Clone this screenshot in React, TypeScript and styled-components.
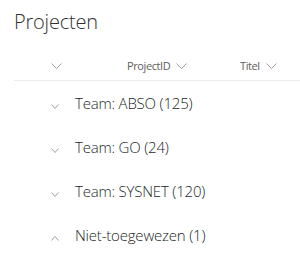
import React from "react";
import styled, { createGlobalStyle } from "styled-components";

const Global = createGlobalStyle`
  html, body { margin: 0; padding: 0; background: #ffffff; }
  body { font-family: "Segoe UI", "Open Sans", "Noto Sans", sans-serif; color: #323130; }
`;

const Page = styled.div`
  width: 300px;
  height: 277px;
  overflow: hidden;
  background: #ffffff;
`;

const Title = styled.h1`
  margin: 0;
  padding: 8px 0 0 14px;
  height: 41px;
  box-sizing: border-box;
  font-size: 20px;
  font-weight: 300;
  line-height: 28px;
  color: #323130;
  letter-spacing: -0.2px;
`;

const HeaderRow = styled.div`
  display: flex;
  align-items: flex-end;
  height: 40px;
  padding-bottom: 7px;
  margin-left: 14px;
  border-bottom: 1px solid #edebe9;
  box-sizing: border-box;
`;

const Cell = styled.div<{ $w: number; $pad?: number }>`
  display: flex;
  align-items: center;
  width: ${(p) => p.$w}px;
  height: 14px;
  padding-left: ${(p) => p.$pad ?? 0}px;
  box-sizing: border-box;
  flex: none;
  font-size: 11px;
  line-height: 14px;
  letter-spacing: -0.4px;
  color: #605e5c;
  gap: 6px;
`;

const List = styled.div`
  display: flex;
  flex-direction: column;
`;

const GroupRow = styled.div`
  display: flex;
  align-items: center;
  height: 44px;
  padding-left: 43px;
`;

const Toggle = styled.span`
  display: flex;
  align-items: center;
  justify-content: center;
  width: 24px;
  height: 24px;
  margin-right: 8px;
  box-sizing: border-box;
  & > svg { margin-top: 6px; }
`;

const GroupTitle = styled.span`
  font-size: 15px;
  font-weight: 300;
  letter-spacing: -0.2px;
  color: #201f1e;
  white-space: nowrap;
`;

const Chevron = ({ up = false, w = 10, h = 5 }: { up?: boolean; w?: number; h?: number }) => (
  <svg width={w} height={h + 1} viewBox={`0 0 ${w} ${h + 1}`} fill="none" stroke="#a19f9d" strokeWidth="1">
    {up ? (
      <polyline points={`0.5,${h + 0.5} ${w / 2},0.5 ${w - 0.5},${h + 0.5}`} />
    ) : (
      <polyline points={`0.5,0.5 ${w / 2},${h + 0.5} ${w - 0.5},0.5`} />
    )}
  </svg>
);

const groups = [
  { name: "Team: ABSO (125)", open: false },
  { name: "Team: GO (24)", open: false },
  { name: "Team: SYSNET (120)", open: false },
  { name: "Niet-toegewezen (1)", open: true },
];

export default function App() {
  return (
    <Page>
      <Global />
      <Title>Projecten</Title>
      <HeaderRow>
        <Cell $w={113} $pad={37}>
          <Chevron w={11} h={5} />
        </Cell>
        <Cell $w={113}>
          ProjectID <Chevron w={11} h={5} />
        </Cell>
        <Cell $w={60}>
          Titel <Chevron w={11} h={5} />
        </Cell>
      </HeaderRow>
      <List>
        {groups.map((g) => (
          <GroupRow key={g.name}>
            <Toggle>
              <Chevron up={g.open} w={8} h={4} />
            </Toggle>
            <GroupTitle>{g.name}</GroupTitle>
          </GroupRow>
        ))}
      </List>
    </Page>
  );
}
